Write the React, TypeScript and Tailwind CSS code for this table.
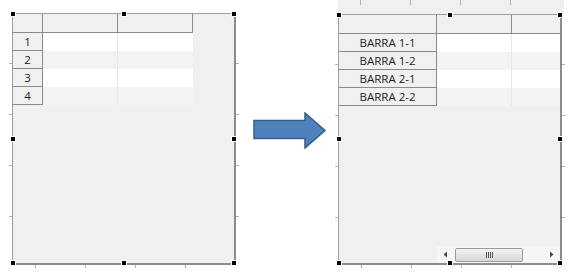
import type { ReactNode } from 'react'

const font = { fontFamily: '"Open Sans", "Noto Sans", sans-serif' }

// Black selection handle with a thin white ring
function Dot() {
  return <div className="size-[6px] shrink-0 border border-white bg-black" />
}

// the eight resize handles round a selected control
function Handles() {
  return (
    <div className="pointer-events-none absolute -inset-[3px] flex flex-col justify-between">
      <div className="flex justify-between">
        <Dot />
        <Dot />
        <Dot />
      </div>
      <div className="flex justify-between">
        <Dot />
        <Dot />
      </div>
      <div className="flex justify-between">
        <Dot />
        <Dot />
        <Dot />
      </div>
    </div>
  )
}

function Ticks({ top = true }: { top?: boolean }) {
  const v = 'h-px w-[3px] bg-[#b4b4b4]'
  const h = 'h-[3px] w-px bg-[#b4b4b4]'
  return (
    <>
      <div className="absolute -left-[4px] top-[49px] flex flex-col gap-[50px]">
        {[0, 1, 2, 3].map((i) => (
          <div key={i} className={v} />
        ))}
      </div>
      <div className="absolute -right-[5px] top-[49px] flex flex-col gap-[50px]">
        {[0, 1, 2, 3].map((i) => (
          <div key={i} className={v} />
        ))}
      </div>
      <div className="absolute -bottom-[5px] left-[22px] flex gap-[49px]">
        {[0, 1, 2, 3].map((i) => (
          <div key={i} className={h} />
        ))}
      </div>
      {top && null}
    </>
  )
}

function Table({ head, labels }: { head: string; labels: string[] }) {
  return (
    <div className="flex w-fit flex-col">
      <div className="flex h-[19px] border-b border-[#8a8a8a]">
        <div className={`${head} shrink-0 border-r border-[#8a8a8a]`} />
        <div className="w-[75px] shrink-0 border-r border-[#8a8a8a]" />
        <div className="w-[75px] shrink-0 border-r border-[#8a8a8a]" />
      </div>
      {labels.map((l, i) => (
        <div key={l} className="flex h-[18px]">
          <div
            className={`${head} flex shrink-0 items-center justify-center border-r border-b border-[#8a8a8a] text-[11.5px] leading-none text-[#1e1e1e]`}
          >
            {l}
          </div>
          <div className={`w-[75px] shrink-0 border-r border-[#e8e8e8] ${i % 2 ? 'bg-[#f3f3f3]' : 'bg-white'}`} />
          <div className={`w-[75px] shrink-0 ${i % 2 ? 'bg-[#f3f3f3]' : 'bg-white'}`} />
        </div>
      ))}
    </div>
  )
}

function Panel({ children, className = '' }: { children: ReactNode; className?: string }) {
  return (
    <div
      className={`relative flex w-[224px] flex-col border-t border-l border-r-2 border-b-2 border-t-[#a0a0a0] border-l-[#a0a0a0] border-r-[#8c8c8c] border-b-[#8c8c8c] bg-[#f0f0f0] ${className}`}
    >
      <div className="flex flex-1 flex-col overflow-hidden">{children}</div>
      <Ticks />
      <Handles />
    </div>
  )
}

function ScrollBar() {
  return (
    <div className="mt-auto flex">
      <div className="w-[98px] shrink-0" />
      <div className="flex h-[17px] flex-1 items-center bg-[#f6f6f6]">
        <svg width="18" height="17" viewBox="0 0 18 17" className="shrink-0">
          <path d="M10 5.5 L6.5 8.5 L10 11.5 Z" fill="#4a4a4a" />
        </svg>
        <div className="flex h-[14px] w-[68px] items-center justify-center rounded-[2px] border border-[#9a9a9a] bg-gradient-to-b from-[#f4f4f4] to-[#d6d6d6]">
          <div className="flex gap-[1px]">
            <div className="h-[6px] w-[1px] bg-[#555]" />
            <div className="h-[6px] w-[1px] bg-[#555]" />
            <div className="h-[6px] w-[1px] bg-[#555]" />
            <div className="h-[6px] w-[1px] bg-[#555]" />
          </div>
        </div>
        <div className="flex-1" />
        <svg width="14" height="17" viewBox="0 0 14 17" className="shrink-0">
          <path d="M4 5.5 L7.5 8.5 L4 11.5 Z" fill="#4a4a4a" />
        </svg>
      </div>
    </div>
  )
}

export default function App() {
  return (
    <div className="flex h-[277px] w-[568px] items-start overflow-hidden bg-white" style={font}>
      <div className="ml-[12px] mt-[13px]">
        <Panel className="h-[252px]">
          <Table head="w-[30px]" labels={['1', '2', '3', '4']} />
        </Panel>
      </div>

      <svg width="74" height="37" viewBox="0 0 74 37" className="ml-[17px] mt-[112px] shrink-0">
        <polygon
          points="1,8.5 52,8.5 52,1 72,18.5 52,36 52,26.5 1,26.5"
          fill="#4f81bd"
          stroke="#385d8a"
          strokeWidth="1.5"
        />
      </svg>

      <div className="ml-[11px] flex w-[226px] flex-col">
        <div className="flex h-[14px] gap-[49px] bg-[#f0f0f0] pl-[22px]">
          {[0, 1, 2, 3].map((i) => (
            <div key={i} className="h-[5px] w-px bg-[#b4b4b4]" />
          ))}
        </div>
        <Panel className="h-[251px]">
          <Table head="w-[98px]" labels={['BARRA 1-1', 'BARRA 1-2', 'BARRA 2-1', 'BARRA 2-2']} />
          <ScrollBar />
        </Panel>
      </div>
    </div>
  )
}
